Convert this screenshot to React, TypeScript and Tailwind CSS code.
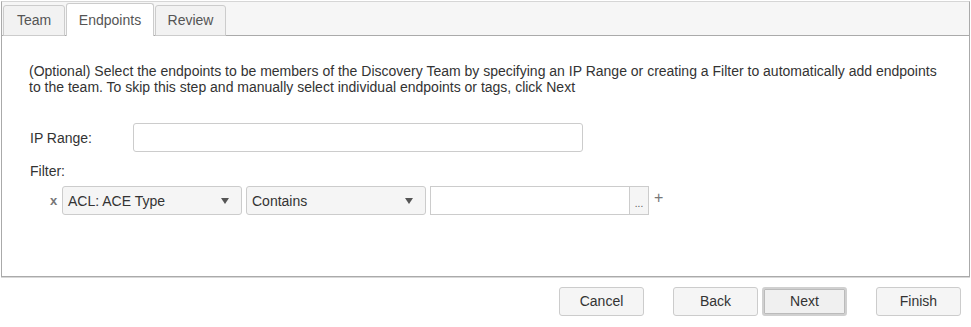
import React from 'react';

const Caret = () => (
  <svg width="8" height="6" viewBox="0 0 8 6" className="ml-auto">
    <path d="M0 0 L8 0 L4 6 Z" fill="#555" />
  </svg>
);

const Select = ({ label }: { label: string }) => (
  <div className="flex h-[29px] w-[180px] items-center rounded-[3px] border border-[#ccc] bg-[#f5f5f5] pl-[5px] pr-[12px] text-[14px] text-[#333]">
    <span>{label}</span>
    <Caret />
  </div>
);

const Btn = ({ label, active }: { label: string; active?: boolean }) => (
  <button
    className={
      active
        ? 'h-[29px] w-[85px] rounded-[3px] border-2 border-[#d0d0d0] bg-[#f0f0f0] text-[14px] text-[#333] shadow-[inset_0_0_0_1px_#bbb]'
        : 'h-[29px] w-[85px] rounded-[3px] border border-[#ccc] bg-[#f5f5f5] text-[14px] text-[#333]'
    }
  >
    {label}
  </button>
);

export default function App() {
  return (
    <div className="h-[327px] w-[971px] bg-white font-['Liberation_Sans',Arial,sans-serif] text-[#333]">
      <div className="ml-px mt-px flex h-[276px] w-[969px] flex-col border border-[#aaa] border-t-[#d6d6d6] border-b-[#aaa] shadow-[0_1px_0_#d8d8d8]">
        <div className="flex h-[34px] items-end gap-px border-b border-[#aaa] bg-[#f6f6f6] pl-px">
          <div className="-mb-px flex h-[31px] w-[62px] items-center justify-center rounded-t-[3px] border border-[#ccc] bg-[#f2f2f2] text-[14px] text-[#555]">
            Team
          </div>
          <div className="-mb-px flex h-[33px] w-[88px] items-center justify-center rounded-t-[3px] border border-b-0 border-[#ccc] bg-white text-[14px] text-[#555]">
            Endpoints
          </div>
          <div className="-mb-px flex h-[31px] w-[71px] items-center justify-center rounded-t-[3px] border border-[#ccc] bg-[#f2f2f2] text-[14px] text-[#555]">
            Review
          </div>
        </div>
        <div className="flex flex-1 flex-col bg-white pl-[27px] pt-[27px] text-[14px] leading-[16px]">
          <p className="pr-[22px]">
            (Optional) Select the endpoints to be members of the Discovery Team by specifying an IP Range or creating a Filter to automatically add endpoints to the team. To skip this step and manually select individual endpoints or tags, click Next
          </p>
          <div className="mt-[28px] flex items-center">
            <span className="w-[104px] pl-px">IP Range:</span>
            <div className="h-[29px] w-[450px] rounded-[3px] border border-[#ccc] bg-white" />
          </div>
          <div className="mt-[11px] pl-px">Filter:</div>
          <div className="mt-[7px] flex items-center">
            <span className="ml-[21px] w-[12px] text-[13px] font-bold text-[#777]">x</span>
            <Select label="ACL: ACE Type" />
            <div className="w-[4px]" />
            <Select label="Contains" />
            <div className="w-[4px]" />
            <div className="flex h-[29px]">
              <div className="w-[200px] border border-[#ccc] bg-white" />
              <div className="flex w-[19px] items-end justify-center border border-l-0 border-[#ccc] bg-[#f5f5f5] pb-[5px] text-[10px] leading-[10px] text-[#555]">
                ...
              </div>
            </div>
            <span className="ml-[5px] -mt-[6px] text-[16px] text-[#777]">+</span>
          </div>
        </div>
      </div>
      <div className="mt-[10px] flex items-center pl-[559px]">
        <Btn label="Cancel" />
        <div className="w-[29px]" />
        <Btn label="Back" />
        <div className="w-[4px]" />
        <Btn label="Next" active />
        <div className="w-[29px]" />
        <Btn label="Finish" />
      </div>
    </div>
  );
}
